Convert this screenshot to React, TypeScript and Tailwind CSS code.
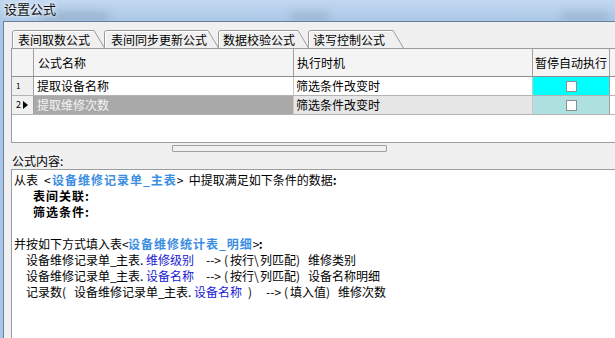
import React from "react";

const S = ({ w, children }: { w: string; children?: React.ReactNode }) => (
  <span className={`inline-block ${w}`}>{children}</span>
);

const Tab = ({ w, pl, label }: { w: number; pl: string; label: string }) => (
  <div className="relative h-[18px] shrink-0 -mr-[1px]" style={{ width: w }}>
    <svg className="absolute inset-0" width={w} height={18}>
      <path
        d={`M0.5 18 V3 Q0.5 0.5 3 0.5 H${w - 11} L${w - 0.5} 18`}
        fill="#f0f0f0"
        stroke="#9b9b9b"
      />
      <path
        d={`M1.5 18 V3.5 Q1.5 1.5 3.5 1.5 H${w - 11.5}`}
        fill="none"
        stroke="#ffffff"
      />
    </svg>
    <span className={`relative block ${pl} text-[12px] leading-[19px] text-black`}>{label}</span>
  </div>
);

const Check = () => <div className="w-[11px] h-[11px] bg-white border border-[#8e8e8e]" />;

export default function App() {
  return (
    <div className="w-[615px] h-[338px] overflow-hidden flex flex-col bg-[#a9c6e8] font-['Noto_Sans_CJK_SC',sans-serif] text-black">
      {/* title bar */}
      <div className="relative h-[21px] shrink-0 overflow-hidden bg-[linear-gradient(180deg,#c3d8ef_0%,#abc8e9_100%)]">
        <span className="absolute left-[40px] top-[12px] w-[70px] h-[10px] rounded-full bg-[#8ea6c2] blur-[5px] opacity-70" />
        <span className="absolute left-[290px] top-[12px] w-[40px] h-[10px] rounded-full bg-[#8ea6c2] blur-[5px] opacity-60" />
        <span className="absolute left-[560px] top-[12px] w-[50px] h-[10px] rounded-full bg-[#8ea6c2] blur-[5px] opacity-60" />
        <span className="relative block pl-[4px] text-[13px] leading-[18px] text-[#111] [text-shadow:0_0_6px_#ffffff,0_0_3px_#ffffff]">
          设置公式
        </span>
      </div>

      {/* content */}
      <div className="flex-1 ml-[3px] flex flex-col bg-[#f0f0f0] border-t border-l border-[#687e9b] pl-[7px] pt-[8px]">
        {/* tabs */}
        <div className="flex ml-[1px] h-[18px] shrink-0">
          <Tab w={93} pl="pl-[6px]" label="表间取数公式" />
          <Tab w={115} pl="pl-[7px]" label="表间同步更新公式" />
          <Tab w={91} pl="pl-[5px]" label="数据校验公式" />
          <Tab w={96} pl="pl-[5px]" label="读写控制公式" />
        </div>

        {/* grid */}
        <div className="h-[95px] shrink-0 bg-white border-t border-l border-b border-[#9c9c9c] flex flex-col text-[12px]">
          {/* header */}
          <div className="h-[28px] flex border-b border-[#8f8f8f] bg-[#f4f4f4]">
            <div className="w-[22px] border-r border-[#a0a0a0]" />
            <div className="w-[260px] border-r border-[#a0a0a0] pl-[4px] flex items-center">公式名称</div>
            <div className="w-[239px] border-r border-[#a0a0a0] pl-[3px] flex items-center">执行时机</div>
            <div className="w-[77px] border-r border-[#a0a0a0] pl-[2px] flex items-center">暂停自动执行</div>
            <div className="flex-1" />
          </div>
          {/* row 1 */}
          <div className="h-[19px] flex border-b border-[#b4b4b4]">
            <div className="w-[22px] border-r border-[#a0a0a0] bg-[#f0f0f0] pl-[4px] flex items-center text-[8px]">1</div>
            <div className="w-[260px] border-r border-[#c8c8c8] pl-[3px] flex items-center">提取设备名称</div>
            <div className="w-[239px] border-r border-[#c8c8c8] pl-[2px] flex items-center">筛选条件改变时</div>
            <div className="w-[77px] border-r border-[#a0a0a0] bg-[#00ffff] flex items-center justify-center">
              <Check />
            </div>
            <div className="flex-1" />
          </div>
          {/* row 2 */}
          <div className="h-[19px] flex border-b border-[#b4b4b4]">
            <div className="w-[22px] border-r border-[#a0a0a0] bg-[#f0f0f0] pl-[4px] flex items-center gap-[2px] text-[9px]">
              <span>2</span>
              <svg width="5" height="8" viewBox="0 0 5 8">
                <path d="M0 0 L5 4 L0 8 Z" fill="#000" />
              </svg>
            </div>
            <div className="w-[260px] border-r border-[#c8c8c8] bg-[#a9a9a9] text-[#f4f4f4] pl-[3px] flex items-center">提取维修次数</div>
            <div className="w-[239px] border-r border-[#c8c8c8] bg-[#e6e6e6] pl-[2px] flex items-center">筛选条件改变时</div>
            <div className="w-[77px] border-r border-[#a0a0a0] bg-[#ade0de] flex items-center justify-center">
              <Check />
            </div>
            <div className="flex-1" />
          </div>
          <div className="flex-1" />
        </div>

        {/* splitter */}
        <div className="mt-[2px] ml-[161px] w-[215px] h-[7px] shrink-0 border border-[#a0a0a0] rounded-[1px] bg-[#f0f0f0]" />

        {/* label */}
        <div className="h-[17px] shrink-0 pl-[1px] text-[12px] leading-[17px]">公式内容:</div>

        {/* memo */}
        <div className="flex-1 bg-white border-t border-l border-[#9c9c9c] pl-[2px] pt-[2px] text-[12px] leading-[16px] whitespace-pre">
          <div className="h-[16px]">
            从表<S w="w-[6px]" />
            <S w="w-[8px]">&lt;</S>
            <span className="font-bold text-[#3b8ee2] tracking-[1px]">设备维修记录单_主表</span>
            <S w="w-[6px]">&gt;</S>
            <S w="w-[6px]" />
            中提取满足如下条件的数据<span className="font-bold">:</span>
          </div>
          <div className="h-[16px] pl-[19px] font-bold tracking-[1px]">表间关联:</div>
          <div className="h-[16px] pl-[19px] font-bold tracking-[1px]">筛选条件:</div>
          <div className="h-[16px]" />
          <div className="h-[16px]">
            并按如下方式填入表<S w="w-[6px]">&lt;</S>
            <span className="font-bold text-[#3b8ee2] tracking-[1px]">设备维修统计表_明细</span>
            <S w="w-[6px]">&gt;</S>
            <span className="font-bold">:</span>
          </div>
          <div className="h-[16px]">
            <S w="w-[12px]" />
            设备维修记录单<S w="w-[6px]">_</S>主表<S w="w-[6px]">.</S>
            <span className="text-[#2020d2]">维修级别</span>
            <S w="w-[12px]" />
            <S w="w-[18px]">--&gt;</S>
            <S w="w-[6px]">(</S>按行<S w="w-[6px]">\</S>列匹配<S w="w-[6px]">)</S>
            <S w="w-[6px]" />
            维修类别
          </div>
          <div className="h-[16px]">
            <S w="w-[12px]" />
            设备维修记录单<S w="w-[6px]">_</S>主表<S w="w-[6px]">.</S>
            <span className="text-[#2020d2]">设备名称</span>
            <S w="w-[12px]" />
            <S w="w-[18px]">--&gt;</S>
            <S w="w-[6px]">(</S>按行<S w="w-[6px]">\</S>列匹配<S w="w-[6px]">)</S>
            <S w="w-[6px]" />
            设备名称明细
          </div>
          <div className="h-[16px]">
            <S w="w-[12px]" />
            记录数<S w="w-[6px]">(</S>
            <S w="w-[6px]" />
            设备维修记录单<S w="w-[6px]">_</S>主表<S w="w-[6px]">.</S>
            <span className="text-[#2020d2]">设备名称</span>
            <S w="w-[6px]" />
            <S w="w-[6px]">)</S>
            <S w="w-[12px]" />
            <S w="w-[18px]">--&gt;</S>
            <S w="w-[6px]">(</S>填入值<S w="w-[6px]">)</S>
            <S w="w-[6px]" />
            维修次数
          </div>
        </div>
      </div>
    </div>
  );
}
